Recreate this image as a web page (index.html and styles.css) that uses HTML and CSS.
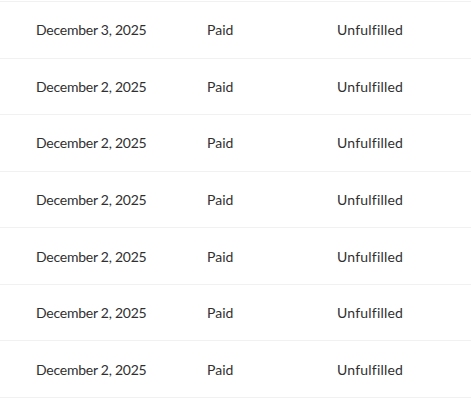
FILE: index.html
```html
<!DOCTYPE html>
<html lang="en">
<head>
    <meta charset="UTF-8">
    <meta name="viewport" content="width=device-width, initial-scale=1.0">
    <title>Orders</title>
    <link rel="stylesheet" href="styles.css">
</head>
<body>
    <div class="orders">
        <div class="row"><span class="date">December 3, 2025</span><span>Paid</span><span class="status">Unfulfilled</span></div>
        <div class="row"><span class="date">December 2, 2025</span><span>Paid</span><span class="status">Unfulfilled</span></div>
        <div class="row"><span class="date">December 2, 2025</span><span>Paid</span><span class="status">Unfulfilled</span></div>
        <div class="row"><span class="date">December 2, 2025</span><span>Paid</span><span class="status">Unfulfilled</span></div>
        <div class="row"><span class="date">December 2, 2025</span><span>Paid</span><span class="status">Unfulfilled</span></div>
        <div class="row"><span class="date">December 2, 2025</span><span>Paid</span><span class="status">Unfulfilled</span></div>
        <div class="row"><span class="date">December 2, 2025</span><span>Paid</span><span class="status">Unfulfilled</span></div>
    </div>
</body>
</html>
```

FILE: styles.css
```css
body{
    margin:0;
    background:#fff;
    font-family:Lato,"Noto Sans",sans-serif;
    font-size:14px;
    color:#303030;
}
.orders{
    padding-top:1px;
    border-bottom:1px solid #f1f1f1;
}
.row{
    display:grid;
    grid-template-columns:171px 130px 1fr;
    align-items:center;
    height:55.57px;
    padding-left:36px;
    border-top:1px solid #f1f1f1;
}
.date{
    letter-spacing:-0.25px;
}
.status{
    letter-spacing:0.2px;
}
```
